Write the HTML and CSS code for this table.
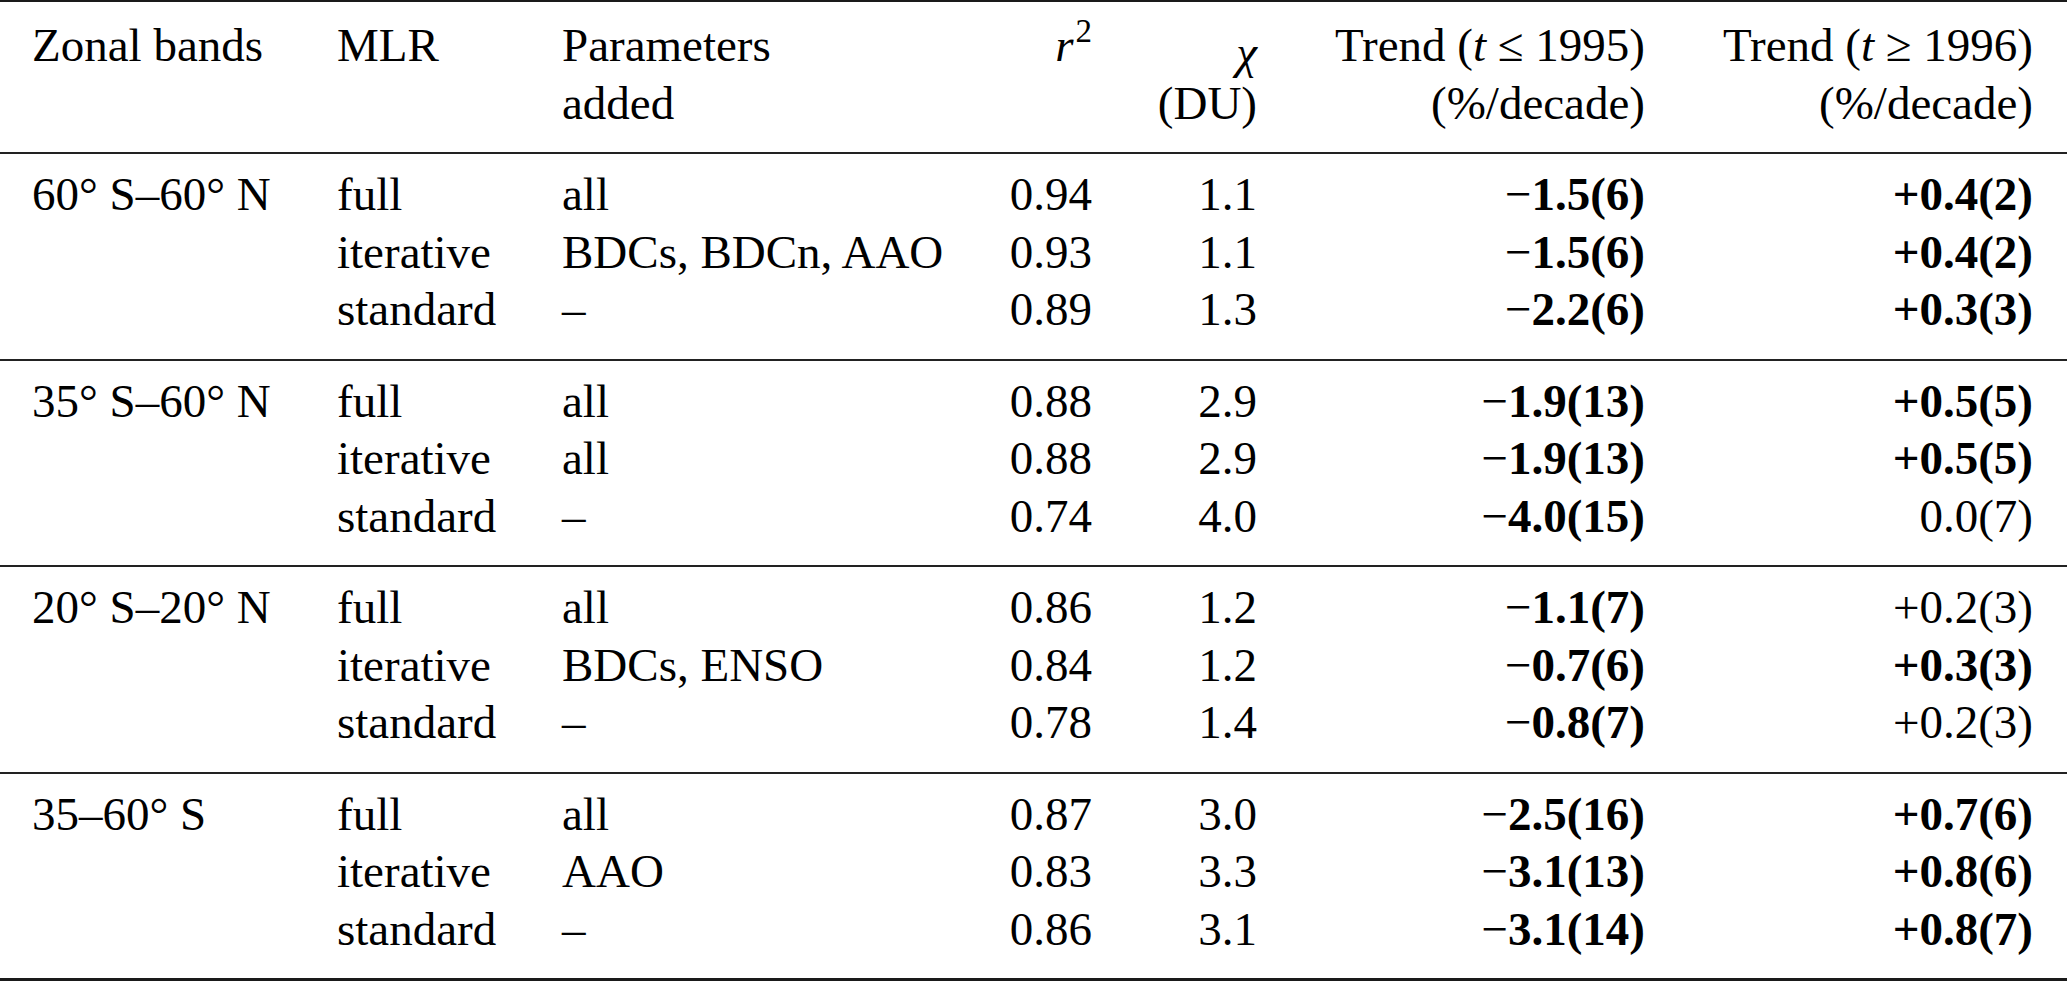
FILE: index.html
```html
<!DOCTYPE html>
<html lang="en">
<head>
<meta charset="utf-8">
<title>MLR trends by zonal band</title>
<link rel="stylesheet" href="styles.css">
</head>
<body>
<div class="table">
  <div class="block head">
    <div class="cell l"><div class="line">Zonal bands</div></div>
    <div class="cell l"><div class="line">MLR</div></div>
    <div class="cell l"><div class="line">Parameters</div><div class="line">added</div></div>
    <div class="cell r"><div class="line"><i>r</i><sup class="sup">2</sup></div></div>
    <div class="cell r"><div class="line"><i class="chi">χ</i></div><div class="line">(DU)</div></div>
    <div class="cell r"><div class="line">Trend (<i>t</i> ≤ 1995)</div><div class="line">(%/decade)</div></div>
    <div class="cell r"><div class="line">Trend (<i>t</i> ≥ 1996)</div><div class="line">(%/decade)</div></div>
  </div>

  <div class="block group">
    <div class="cell l"><div class="line">60° S–60° N</div></div>
    <div class="cell l"><div class="line">full</div><div class="line">iterative</div><div class="line">standard</div></div>
    <div class="cell l"><div class="line">all</div><div class="line">BDCs, BDCn, AAO</div><div class="line">–</div></div>
    <div class="cell r"><div class="line">0.94</div><div class="line">0.93</div><div class="line">0.89</div></div>
    <div class="cell r"><div class="line">1.1</div><div class="line">1.1</div><div class="line">1.3</div></div>
    <div class="cell r"><div class="line">−<b>1.5(6)</b></div><div class="line">−<b>1.5(6)</b></div><div class="line">−<b>2.2(6)</b></div></div>
    <div class="cell r"><div class="line"><b>+0.4(2)</b></div><div class="line"><b>+0.4(2)</b></div><div class="line"><b>+0.3(3)</b></div></div>
  </div>

  <div class="block group">
    <div class="cell l"><div class="line">35° S–60° N</div></div>
    <div class="cell l"><div class="line">full</div><div class="line">iterative</div><div class="line">standard</div></div>
    <div class="cell l"><div class="line">all</div><div class="line">all</div><div class="line">–</div></div>
    <div class="cell r"><div class="line">0.88</div><div class="line">0.88</div><div class="line">0.74</div></div>
    <div class="cell r"><div class="line">2.9</div><div class="line">2.9</div><div class="line">4.0</div></div>
    <div class="cell r"><div class="line">−<b>1.9(13)</b></div><div class="line">−<b>1.9(13)</b></div><div class="line">−<b>4.0(15)</b></div></div>
    <div class="cell r"><div class="line"><b>+0.5(5)</b></div><div class="line"><b>+0.5(5)</b></div><div class="line">0.0(7)</div></div>
  </div>

  <div class="block group">
    <div class="cell l"><div class="line">20° S–20° N</div></div>
    <div class="cell l"><div class="line">full</div><div class="line">iterative</div><div class="line">standard</div></div>
    <div class="cell l"><div class="line">all</div><div class="line">BDCs, ENSO</div><div class="line">–</div></div>
    <div class="cell r"><div class="line">0.86</div><div class="line">0.84</div><div class="line">0.78</div></div>
    <div class="cell r"><div class="line">1.2</div><div class="line">1.2</div><div class="line">1.4</div></div>
    <div class="cell r"><div class="line">−<b>1.1(7)</b></div><div class="line">−<b>0.7(6)</b></div><div class="line">−<b>0.8(7)</b></div></div>
    <div class="cell r"><div class="line">+0.2(3)</div><div class="line"><b>+0.3(3)</b></div><div class="line">+0.2(3)</div></div>
  </div>

  <div class="block group last">
    <div class="cell l"><div class="line">35–60° S</div></div>
    <div class="cell l"><div class="line">full</div><div class="line">iterative</div><div class="line">standard</div></div>
    <div class="cell l"><div class="line">all</div><div class="line">AAO</div><div class="line">–</div></div>
    <div class="cell r"><div class="line">0.87</div><div class="line">0.83</div><div class="line">0.86</div></div>
    <div class="cell r"><div class="line">3.0</div><div class="line">3.3</div><div class="line">3.1</div></div>
    <div class="cell r"><div class="line">−<b>2.5(16)</b></div><div class="line">−<b>3.1(13)</b></div><div class="line">−<b>3.1(14)</b></div></div>
    <div class="cell r"><div class="line"><b>+0.7(6)</b></div><div class="line"><b>+0.8(6)</b></div><div class="line"><b>+0.8(7)</b></div></div>
  </div>
</div>
</body>
</html>
```

FILE: styles.css
```css
html, body {
  margin: 0;
  padding: 0;
  background: #ffffff;
}

body {
  font-family: "Liberation Serif", "Times New Roman", serif;
  font-size: 47px;
  line-height: 57.5px;
  color: #000000;
}

.table {
  width: 2067px;
}

.block {
  display: grid;
  grid-template-columns: 305px 225px 380px 150px 165px 388px 388px;
  padding-left: 32px;
  padding-right: 34px;
}

.head {
  border-top: 2px solid #1a1a1a;
  padding-top: 15px;
  padding-bottom: 20px;
}

.group {
  border-top: 2px solid #222222;
  padding-top: 12px;
  padding-bottom: 20px;
}

.group.last {
  border-bottom: 3px solid #1a1a1a;
}

.cell {
  white-space: nowrap;
}

.cell.l {
  text-align: left;
}

.cell.r {
  text-align: right;
}

.line {
  height: 57.5px;
}

.sup {
  font-size: 33px;
  line-height: 0;
  vertical-align: 19px;
  margin-left: 2px;
}

.chi {
  display: inline-block;
  transform: translateY(7px);
}

b {
  font-weight: bold;
}
```
